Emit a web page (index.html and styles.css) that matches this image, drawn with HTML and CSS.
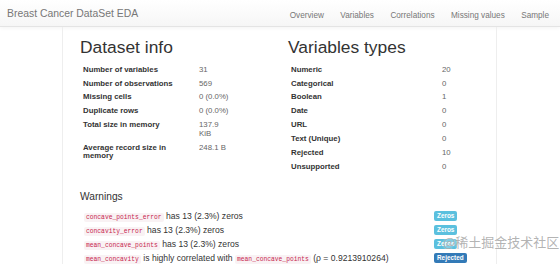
FILE: index.html
```html
<!DOCTYPE html>
<html lang="en">
<head>
<meta charset="UTF-8" />
<meta name="viewport" content="width=device-width, initial-scale=1" />
<title>Breast Cancer DataSet EDA</title>
<link rel="stylesheet" href="styles.css">
</head>
<body>
  <nav class="navbar">
    <a class="brand" href="#">Breast Cancer DataSet EDA</a>
    <ul class="nav">
      <li><a href="#overview">Overview</a></li>
      <li><a href="#variables">Variables</a></li>
      <li><a href="#correlations">Correlations</a></li>
      <li><a href="#missing">Missing values</a></li>
      <li><a href="#sample">Sample</a></li>
    </ul>
  </nav>

  <main class="container" id="overview">
    <div class="row">
      <section class="col">
        <h2>Dataset info</h2>
        <table class="stats stats-info">
          <tr><th>Number of variables</th><td>31</td></tr>
          <tr><th>Number of observations</th><td>569</td></tr>
          <tr><th>Missing cells</th><td>0 (0.0%)</td></tr>
          <tr><th>Duplicate rows</th><td>0 (0.0%)</td></tr>
          <tr><th>Total size in memory</th><td>137.9<br>KiB</td></tr>
          <tr><th>Average record size in<br>memory</th><td>248.1 B</td></tr>
        </table>
      </section>
      <section class="col">
        <h2>Variables types</h2>
        <table class="stats stats-types">
          <tr><th>Numeric</th><td>20</td></tr>
          <tr><th>Categorical</th><td>0</td></tr>
          <tr><th>Boolean</th><td>1</td></tr>
          <tr><th>Date</th><td>0</td></tr>
          <tr><th>URL</th><td>0</td></tr>
          <tr><th>Text (Unique)</th><td>0</td></tr>
          <tr><th>Rejected</th><td>10</td></tr>
          <tr><th>Unsupported</th><td>0</td></tr>
        </table>
      </section>
    </div>

    <section class="warnings">
      <h3>Warnings</h3>
      <div class="warning-row">
        <p><code>concave_points_error</code> has 13 (2.3%) zeros</p>
        <span class="label label-info">Zeros</span>
      </div>
      <div class="warning-row">
        <p><code>concavity_error</code> has 13 (2.3%) zeros</p>
        <span class="label label-info">Zeros</span>
      </div>
      <div class="warning-row">
        <p><code>mean_concave_points</code> has 13 (2.3%) zeros</p>
        <span class="label label-info">Zeros</span>
      </div>
      <div class="warning-row">
        <p><code>mean_concavity</code> is highly correlated with <code>mean_concave_points</code> (&rho; = 0.9213910264)</p>
        <span class="label label-primary">Rejected</span>
      </div>
    </section>
  </main>

  <div class="watermark">@稀土掘金技术社区</div>
</body>
</html>
```

FILE: styles.css
```css
html, body {
  height: 100%;
}

body {
  margin: 0;
  background: #fff;
  font-family: "Liberation Sans", Arial, sans-serif;
  color: #333;
  overflow: hidden;
}

a {
  text-decoration: none;
}

.navbar {
  height: 26px;
  display: flex;
  align-items: center;
  justify-content: space-between;
  padding: 0 11px 0 7px;
  background: linear-gradient(#fff, #f6f6f6);
  border-bottom: 1px solid #e4e4e4;
  box-shadow: 0 1px 4px rgba(0, 0, 0, 0.05);
}

.brand {
  font-size: 10.4px;
  color: #777;
}

.nav {
  display: flex;
  gap: 16.5px;
  margin: 0;
  padding: 0;
  list-style: none;
}

.nav a {
  font-size: 8.2px;
  color: #777;
}

.container {
  width: 399px;
  min-height: 100%;
  margin: 0 62px;
  padding: 0 17px;
  border-left: 1px solid #eee;
  border-right: 1px solid #eee;
}

.row {
  display: grid;
  grid-template-columns: 191px 191px;
  column-gap: 17px;
}

h2 {
  margin: 9px 0 5px;
  font-size: 17.4px;
  font-weight: normal;
  line-height: 22px;
}

.stats {
  border-collapse: collapse;
  font-size: 7.8px;
  line-height: 8.5px;
}

.stats th,
.stats td {
  padding: 2.7px 3px;
  text-align: left;
  vertical-align: top;
}

.stats th {
  color: #333;
}

.stats td {
  color: #666;
}

.stats-info th {
  width: 110px;
}

.stats-types th {
  width: 145px;
}

.warnings {
  margin-top: 16px;
}

h3 {
  margin: 0 0 5px 0;
  font-size: 10.2px;
  font-weight: normal;
  line-height: 14px;
}

.warning-row {
  display: grid;
  grid-template-columns: 354px 1fr;
  align-items: center;
  height: 14px;
}

.warning-row p {
  margin: 0 0 0 4px;
  font-size: 8.6px;
  color: #333;
  white-space: nowrap;
}

code {
  padding: 1px 2px;
  font-family: "Liberation Mono", "DejaVu Sans Mono", monospace;
  font-size: 6.3px;
  color: #c7254e;
  background: #f9f2f4;
  border-radius: 2px;
}

.label {
  justify-self: start;
  padding: 1px 3px 2px;
  font-size: 6.4px;
  font-weight: bold;
  color: #fff;
  border-radius: 2px;
  line-height: 7px;
}

.label-info {
  background: #5bc0de;
}

.label-primary {
  background: #337ab7;
}

.watermark {
  position: absolute;
  left: 443px;
  top: 232px;
  font-family: "Noto Sans CJK SC", sans-serif;
  font-size: 13px;
  color: rgba(160, 160, 160, 0.8);
  text-shadow: 0 0 2px #fff;
  pointer-events: none;
}
```
